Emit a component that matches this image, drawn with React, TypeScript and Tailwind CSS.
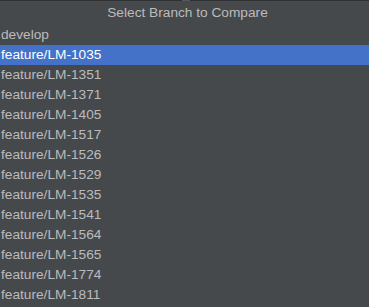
const branches = [
  "develop",
  "feature/LM-1035",
  "feature/LM-1351",
  "feature/LM-1371",
  "feature/LM-1405",
  "feature/LM-1517",
  "feature/LM-1526",
  "feature/LM-1529",
  "feature/LM-1535",
  "feature/LM-1541",
  "feature/LM-1564",
  "feature/LM-1565",
  "feature/LM-1774",
  "feature/LM-1811",
];

export default function App() {
  return (
    <div
      className="w-[369px] h-[307px] bg-[#46494c] overflow-hidden flex flex-col"
      style={{ fontFamily: '"Liberation Sans", Arial, sans-serif' }}
    >
      <div className="h-px flex">
        <div className="w-[182px] bg-[#2f3133]" />
        <div className="w-[8px] bg-[#55585b]" />
        <div className="flex-1 bg-[#2f3133]" />
      </div>
      <div className="h-[24px] flex items-center justify-center pl-[6px] text-[13.7px] text-[#bbbbbb]">
        Select Branch to Compare
      </div>
      <div className="flex flex-col">
        {branches.map((b, i) => (
          <div
            key={b}
            className={
              i === 1
                ? "h-[20px] flex items-center pl-[1px] text-[13.7px] bg-[#4372c8] text-white"
                : "h-[20px] flex items-center pl-[1px] text-[13.7px] text-[#bbbbbb]"
            }
          >
            {b}
          </div>
        ))}
      </div>
    </div>
  );
}
